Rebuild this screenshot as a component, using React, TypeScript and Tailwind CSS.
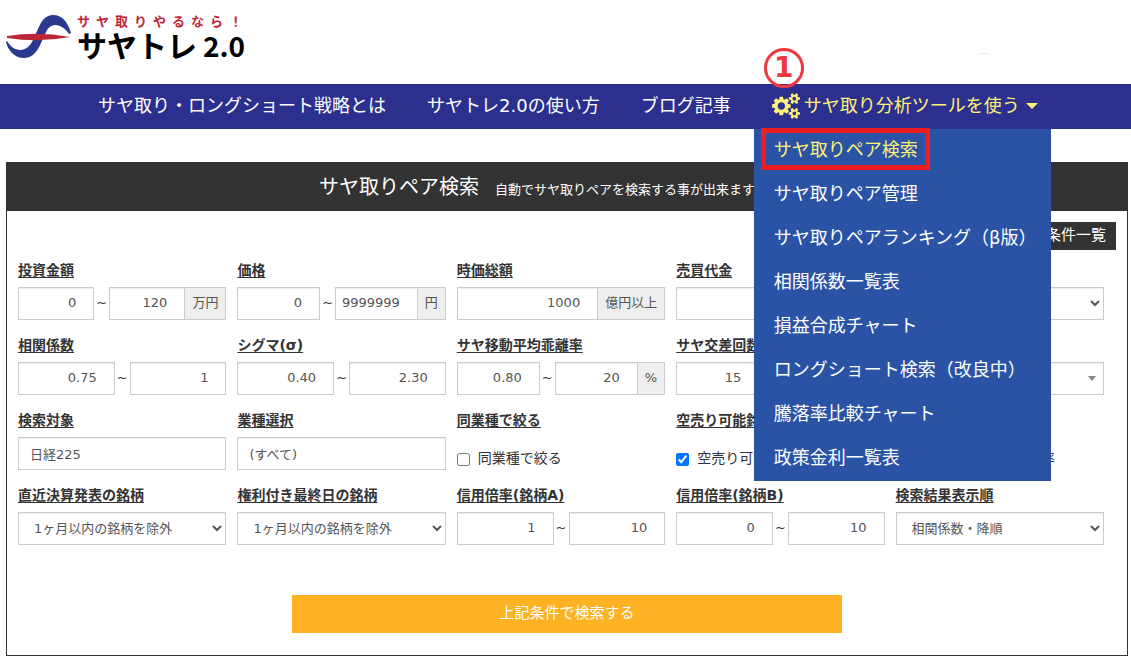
import React, { useId, useState } from "react";

const fieldClass =
  "h-[33px] w-full min-w-0 border border-[#ccc] bg-white text-[13px] text-[#555] shadow-[inset_0_1px_1px_rgba(0,0,0,0.075)] outline-none";

const toolLinks = [
  "サヤ取りペア検索",
  "サヤ取りペア管理",
  "サヤ取りペアランキング（β版）",
  "相関係数一覧表",
  "損益合成チャート",
  "ロングショート検索（改良中）",
  "騰落率比較チャート",
  "政策金利一覧表",
];

const Logo: React.FC = () => (
  <a href="#" className="flex gap-[5px]">
    <svg viewBox="0 0 66 46" className="mt-3.5 h-[46px] w-[66px]" aria-hidden="true">
      <path
        d="M1 27C7 37 17 39 24 31C32 21 33 1 47 1C57 1 62 9 65 19L63 20C57 11 47 7 41 16C35 27 32 44 18 44C8 44 2 36 0 28Z"
        fill="#2b3990"
      />
      <path d="M1 22Q33 17 64 23Q33 29 1 24Z" fill="#be2637" />
    </svg>
    <span className="block pt-3">
      <span className="flex gap-1.5 text-[13px] leading-5 font-bold text-[#be2637]">
        {Array.from("サヤ取りやるなら！").map((char, i) => (
          <span key={i}>{char}</span>
        ))}
      </span>
      <span className="flex items-baseline gap-1.5 font-['Noto_Sans_CJK_JP',sans-serif] leading-6 font-bold text-black">
        <span className="text-[30px]">サヤトレ</span>
        <span className="text-[28px]">2.0</span>
      </span>
    </span>
  </a>
);

const GearsIcon: React.FC = () => (
  <svg viewBox="0 0 1920 1792" className="h-[26px] w-7" fill="currentColor" aria-hidden="true">
    <path d="M896 896q0-106-75-181t-181-75-181 75-75 181 75 181 181 75 181-75 75-181zm768 512q0-52-38-90t-90-38-90 38-38 90q0 53 37.5 90.5t90.5 37.5 90.5-37.5 37.5-90.5zm0-1024q0-52-38-90t-90-38-90 38-38 90q0 53 37.5 90.5t90.5 37.5 90.5-37.5 37.5-90.5zm-384 421v185q0 10-7 19.5t-16 10.5l-155 24q-11 35-32 76 34 48 90 115 7 11 7 20 0 12-7 19-23 30-82.5 89.5t-78.5 59.5q-11 0-21-7l-115-90q-37 19-77 31-11 108-23 155-7 24-30 24h-186q-11 0-20-7.5t-10-17.5l-23-153q-34-10-75-31l-118 89q-7 7-20 7-11 0-21-8-144-133-144-160 0-9 7-19 10-14 41-53t47-61q-23-44-35-82l-152-24q-10-1-17-9.5t-7-19.5v-185q0-10 7-19.5t16-10.5l155-24q11-35 32-76-34-48-90-115-7-11-7-20 0-12 7-20 22-30 82-89t79-59q11 0 21 7l115 90q34-18 77-32 11-108 23-154 7-24 30-24h186q11 0 20 7.5t10 17.5l23 153q34 10 75 31l118-89q8-7 20-7 11 0 21 8 144 133 144 160 0 8-7 19-12 16-42 54t-45 60q23 48 34 82l152 23q10 2 17 10.5t7 19.5zm640 533v140q0 16-149 31-12 27-30 52 51 113 51 138 0 4-4 7-122 71-124 71-8 0-46-47t-52-68q-20 2-30 2t-30-2q-14 21-52 68t-46 47q-2 0-124-71-4-3-4-7 0-25 51-138-18-25-30-52-149-15-149-31v-140q0-16 149-31 13-29 30-52-51-113-51-138 0-4 4-7 4-2 35-20t59-34 30-16q8 0 46 46.5t52 67.5q20-2 30-2t30 2q51-71 92-112l6-2q4 0 124 70 4 3 4 7 0 25-51 138 17 23 30 52 149 15 149 31zm0-1024v140q0 16-149 31-12 27-30 52 51 113 51 138 0 4-4 7-122 71-124 71-8 0-46-47t-52-68q-20 2-30 2t-30-2q-14 21-52 68t-46 47q-2 0-124-71-4-3-4-7 0-25 51-138-18-25-30-52-149-15-149-31v-140q0-16 149-31 13-29 30-52-51-113-51-138 0-4 4-7 4-2 35-20t59-34 30-16q8 0 46 46.5t52 67.5q20-2 30-2t30 2q51-71 92-112l6-2q4 0 124 70 4 3 4 7 0 25-51 138 17 23 30 52 149 15 149 31z" />
  </svg>
);

const NavBar: React.FC = () => (
  <nav className="bg-[#2b308f]">
    <ul className="flex h-[45px] gap-[41px] pl-[98px] text-lg leading-[44px] whitespace-nowrap text-white">
      <li>
        <a href="#">サヤ取り・ロングショート戦略とは</a>
      </li>
      <li>
        <a href="#">サヤトレ2.0の使い方</a>
      </li>
      <li>
        <a href="#">ブログ記事</a>
      </li>
      <li className="relative">
        <a href="#" className="flex items-center gap-1 text-[#fff177]">
          <GearsIcon />
          サヤ取り分析ツールを使う
          <span className="ml-0.5 border-x-6 border-t-6 border-x-transparent border-t-[#fff177]" />
        </a>
        <span className="absolute -top-9 -left-2 flex size-10 items-center justify-center rounded-full border-3 border-[#ee3840] text-[28px] leading-none font-bold text-[#ee3840]">
          1
        </span>
        <ul className="absolute top-[45px] -left-[18px] z-10 w-[297px] bg-[#2a53a6]">
          {toolLinks.map((label, i) => (
            <li key={label} className="relative">
              <a
                href="#"
                className={`block px-5 pb-0.5 leading-[42px] ${i === 0 ? "text-[#fff177]" : "text-white"}`}
              >
                {label}
              </a>
              {i === 0 && (
                <span className="pointer-events-none absolute -top-px left-[7px] h-[42px] w-[169px] border-5 border-[#ee1c23]" />
              )}
            </li>
          ))}
        </ul>
      </li>
    </ul>
  </nav>
);

const Unit: React.FC<{ children: React.ReactNode }> = ({ children }) => (
  <span className="flex h-[33px] shrink-0 items-center border border-l-0 border-[#ccc] bg-[#eee] px-[7px] pb-0.5 text-[13px] text-[#555]">
    {children}
  </span>
);

const FieldLabel: React.FC<{ htmlFor: string; children: React.ReactNode }> = ({
  htmlFor,
  children,
}) => (
  <label
    htmlFor={htmlFor}
    className="mb-[7px] block text-sm leading-5 font-bold whitespace-nowrap underline underline-offset-2"
  >
    {children}
  </label>
);

interface RangeFieldProps {
  label: string;
  from: string;
  to: string;
  unit?: string;
}

const RangeField: React.FC<RangeFieldProps> = ({ label, from, to, unit }) => {
  const id = useId();
  return (
    <div>
      <FieldLabel htmlFor={id}>{label}</FieldLabel>
      <div className="flex items-center">
        <input
          id={id}
          defaultValue={from}
          className={`${fieldClass} flex-1 pr-[17px] pb-0.5 text-right`}
        />
        <span className="w-[15px] shrink-0 pb-0.5 text-center text-[13px]">~</span>
        <input
          aria-label={label}
          defaultValue={to}
          className={`${fieldClass} flex-1 pr-[17px] pb-0.5 text-right`}
        />
        {unit !== undefined && <Unit>{unit}</Unit>}
      </div>
    </div>
  );
};

const TextField: React.FC<{ label: string; value: string }> = ({ label, value }) => {
  const id = useId();
  return (
    <div>
      <FieldLabel htmlFor={id}>{label}</FieldLabel>
      <input id={id} defaultValue={value} className={`${fieldClass} px-[11px]`} />
    </div>
  );
};

const AmountField: React.FC<{ label: string; value: string; unit?: string }> = ({
  label,
  value,
  unit,
}) => {
  const id = useId();
  return (
    <div>
      <FieldLabel htmlFor={id}>{label}</FieldLabel>
      <div className="flex">
        <input
          id={id}
          defaultValue={value}
          className={`${fieldClass} flex-1 pr-[17px] pb-0.5 text-right`}
        />
        {unit && <Unit>{unit}</Unit>}
      </div>
    </div>
  );
};

const SelectField: React.FC<{ label: string; value: string }> = ({ label, value }) => {
  const id = useId();
  return (
    <div>
      <FieldLabel htmlFor={id}>{label}</FieldLabel>
      <select id={id} className={`${fieldClass} px-[11px]`}>
        <option>{value}</option>
      </select>
    </div>
  );
};

const CheckField: React.FC<{ label: string; initial?: boolean }> = ({
  label,
  initial = false,
}) => {
  const id = useId();
  const [checked, setChecked] = useState(initial);
  return (
    <div>
      <FieldLabel htmlFor={id}>{label}</FieldLabel>
      <label className="flex items-center gap-2 pt-[11px] text-sm leading-5 whitespace-nowrap">
        <input
          id={id}
          type="checkbox"
          checked={checked}
          onChange={(e) => setChecked(e.target.checked)}
          className="mt-0.5 size-[13px] accent-[#0075ff]"
        />
        {label}
      </label>
    </div>
  );
};

export default function App() {
  return (
    <div className="bg-white font-['DejaVu_Sans','Noto_Sans_CJK_JP',sans-serif] text-[#333]">
      <header className="flex h-[84px] items-start justify-between pr-[142px] pl-1.5">
        <Logo />
        <span className="mt-[53px] h-px w-2.5 bg-[#eee]" />
      </header>
      <NavBar />

      <main className="mt-[33px] mr-[3px] mb-[3px] ml-1.5 border border-[#333]">
        <div className="flex h-12 items-baseline justify-center gap-4 bg-[#333] pr-[60px] text-white">
          <h1 className="text-xl leading-[48px]">サヤ取りペア検索</h1>
          <p className="text-[13px]">自動でサヤ取りペアを検索する事が出来ます</p>
        </div>

        <div className="flex justify-end pt-[11px] pr-[11px]">
          <button className="h-7 bg-[#333] px-2.5 pb-0.5 text-[15px] leading-6 text-white">
            条件一覧
          </button>
        </div>

        <form onSubmit={(e) => e.preventDefault()}>
          <div className="grid grid-cols-5 gap-x-[11px] gap-y-[15px] pt-2.5 pr-[23px] pl-[11px]">
            <RangeField label="投資金額" from="0" to="120" unit="万円" />
            <RangeField label="価格" from="0" to="9999999" unit="円" />
            <AmountField label="時価総額" value="1000" unit="億円以上" />
            <AmountField label="売買代金" value="" />
            <div className="pt-[27px]">
              <select aria-label="売買代金" className={`${fieldClass} px-[11px]`} />
            </div>

            <RangeField label="相関係数" from="0.75" to="1" />
            <RangeField label="シグマ(σ)" from="0.40" to="2.30" />
            <RangeField label="サヤ移動平均乖離率" from="0.80" to="20" unit="%" />
            <div>
              <FieldLabel htmlFor="cross-count">サヤ交差回数</FieldLabel>
              <div className="flex gap-4">
                <input
                  id="cross-count"
                  defaultValue="15"
                  className={`${fieldClass} basis-[83px] pr-[17px] pb-0.5 text-right`}
                />
                <input aria-label="サヤ交差回数" className={`${fieldClass} flex-1`} />
              </div>
            </div>
            <div className="grid items-center pt-[27px]">
              <select
                aria-label="サヤ交差回数"
                className={`${fieldClass} col-start-1 row-start-1 appearance-none px-[11px]`}
              />
              <span className="pointer-events-none col-start-1 row-start-1 mr-2 justify-self-end border-x-4 border-t-5 border-x-transparent border-t-[#888]" />
            </div>

            <TextField label="検索対象" value="日経225" />
            <TextField label="業種選択" value="(すべて)" />
            <CheckField label="同業種で絞る" />
            <CheckField label="空売り可能銘柄" initial />
            <p className="pt-[38px] pr-[49px] text-right text-sm leading-5">率</p>

            <SelectField label="直近決算発表の銘柄" value="1ヶ月以内の銘柄を除外" />
            <SelectField label="権利付き最終日の銘柄" value="1ヶ月以内の銘柄を除外" />
            <RangeField label="信用倍率(銘柄A)" from="1" to="10" />
            <RangeField label="信用倍率(銘柄B)" from="0" to="10" />
            <SelectField label="検索結果表示順" value="相関係数・降順" />
          </div>

          <div className="flex justify-center pt-[50px] pb-[22px]">
            <button
              type="submit"
              className="h-[38px] w-[550px] bg-[#ffb223] pb-0.5 text-[15px] text-white"
            >
              上記条件で検索する
            </button>
          </div>
        </form>
      </main>
    </div>
  );
}
